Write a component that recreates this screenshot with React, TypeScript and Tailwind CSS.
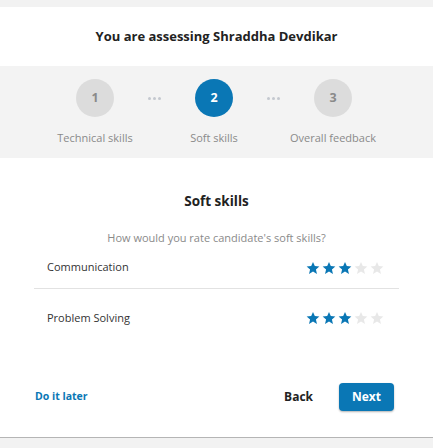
const font = { fontFamily: "'Open Sans', Lato, sans-serif" };

function Star({ on }: { on: boolean }) {
	return (
		<svg width="14" height="14" viewBox="0 0 24 24" className={on ? "fill-[#0a77b5]" : "fill-[#e8e8e8]"}>
			<path d="M12 1.5l3.1 7.2 7.8.7-5.9 5.2 1.8 7.7L12 18.2l-6.8 4.1 1.8-7.7L1.1 9.4l7.8-.7z" />
		</svg>
	);
}

function Stars({ value }: { value: number }) {
	return (
		<div className="flex gap-[2px]">
			{[1, 2, 3, 4, 5].map((i) => (
				<Star key={i} on={i <= value} />
			))}
		</div>
	);
}

function Step({ n, label, active }: { n: number; label: string; active?: boolean }) {
	return (
		<div className="flex flex-col items-center w-[100px]">
			<div className={`w-[38px] h-[38px] rounded-full flex items-center justify-center text-[12.5px] font-bold ${active ? "bg-[#0a77b5] text-white" : "bg-[#dcdcdc] text-[#8a8a8a]"}`}>{n}</div>
			<div className="mt-[14px] text-[11px] leading-[14px] text-[#8a8a8a] whitespace-nowrap">{label}</div>
		</div>
	);
}

function Dots() {
	return (
		<div className="flex gap-[2px] mt-[18px] w-[19px] justify-center">
			<span className="w-[3px] h-[3px] rounded-full bg-[#c4c8cf]" />
			<span className="w-[3px] h-[3px] rounded-full bg-[#c4c8cf]" />
			<span className="w-[3px] h-[3px] rounded-full bg-[#c4c8cf]" />
		</div>
	);
}

export default function App() {
	return (
		<div className="w-[433px] h-[448px] bg-[#f2f2f2] flex flex-col" style={font}>
			<div className="h-[7px]" />
			<div className="bg-white h-[59px] flex items-center justify-center">
				<h1 className="text-[13px] font-bold text-[#222] mt-[1px]">You are assessing Shraddha Devdikar</h1>
			</div>
			<div className="bg-[#f3f3f3] h-[92px] flex items-start justify-center pt-[13px] pr-[5px]">
				<Step n={1} label="Technical skills" />
				<Dots />
				<Step n={2} label="Soft skills" active />
				<Dots />
				<Step n={3} label="Overall feedback" />
			</div>
			<div className="bg-white flex-1 flex flex-col border-b border-[#b5b5b5]">
				<div className="text-center text-[13.5px] leading-[16px] font-bold text-[#222] mt-[35px]">Soft skills</div>
				<div className="text-center text-[11px] leading-[14px] text-[#8a8a8a] mt-[22px]">How would you rate candidate's soft skills?</div>
				<div className="mx-[34px] mt-[2px]">
					<div className="flex items-center justify-between h-[42px] pl-[13px] pr-[15px] border-b border-[#e2e2e2]">
						<span className="text-[11px] text-[#333]">Communication</span>
						<Stars value={3} />
					</div>
					<div className="flex items-center justify-between h-[58px] pl-[13px] pr-[15px]">
						<span className="text-[11px] text-[#333]">Problem Solving</span>
						<Stars value={3} />
					</div>
				</div>
				<div className="flex items-center justify-between ml-[35px] mr-[39px] mt-[36px]">
					<button className="text-[10.5px] font-bold text-[#0a77b5]">Do it later</button>
					<div className="flex items-center gap-[26px]">
						<button className="text-[12px] font-bold text-[#222]">Back</button>
						<button className="w-[55px] h-[28px] rounded-[4px] bg-[#0a77b5] text-white text-[12px] font-bold shadow-[0_1px_2px_rgba(0,0,0,0.3)]">Next</button>
					</div>
				</div>
			</div>
			<div className="h-[10px]" />
		</div>
	);
}
